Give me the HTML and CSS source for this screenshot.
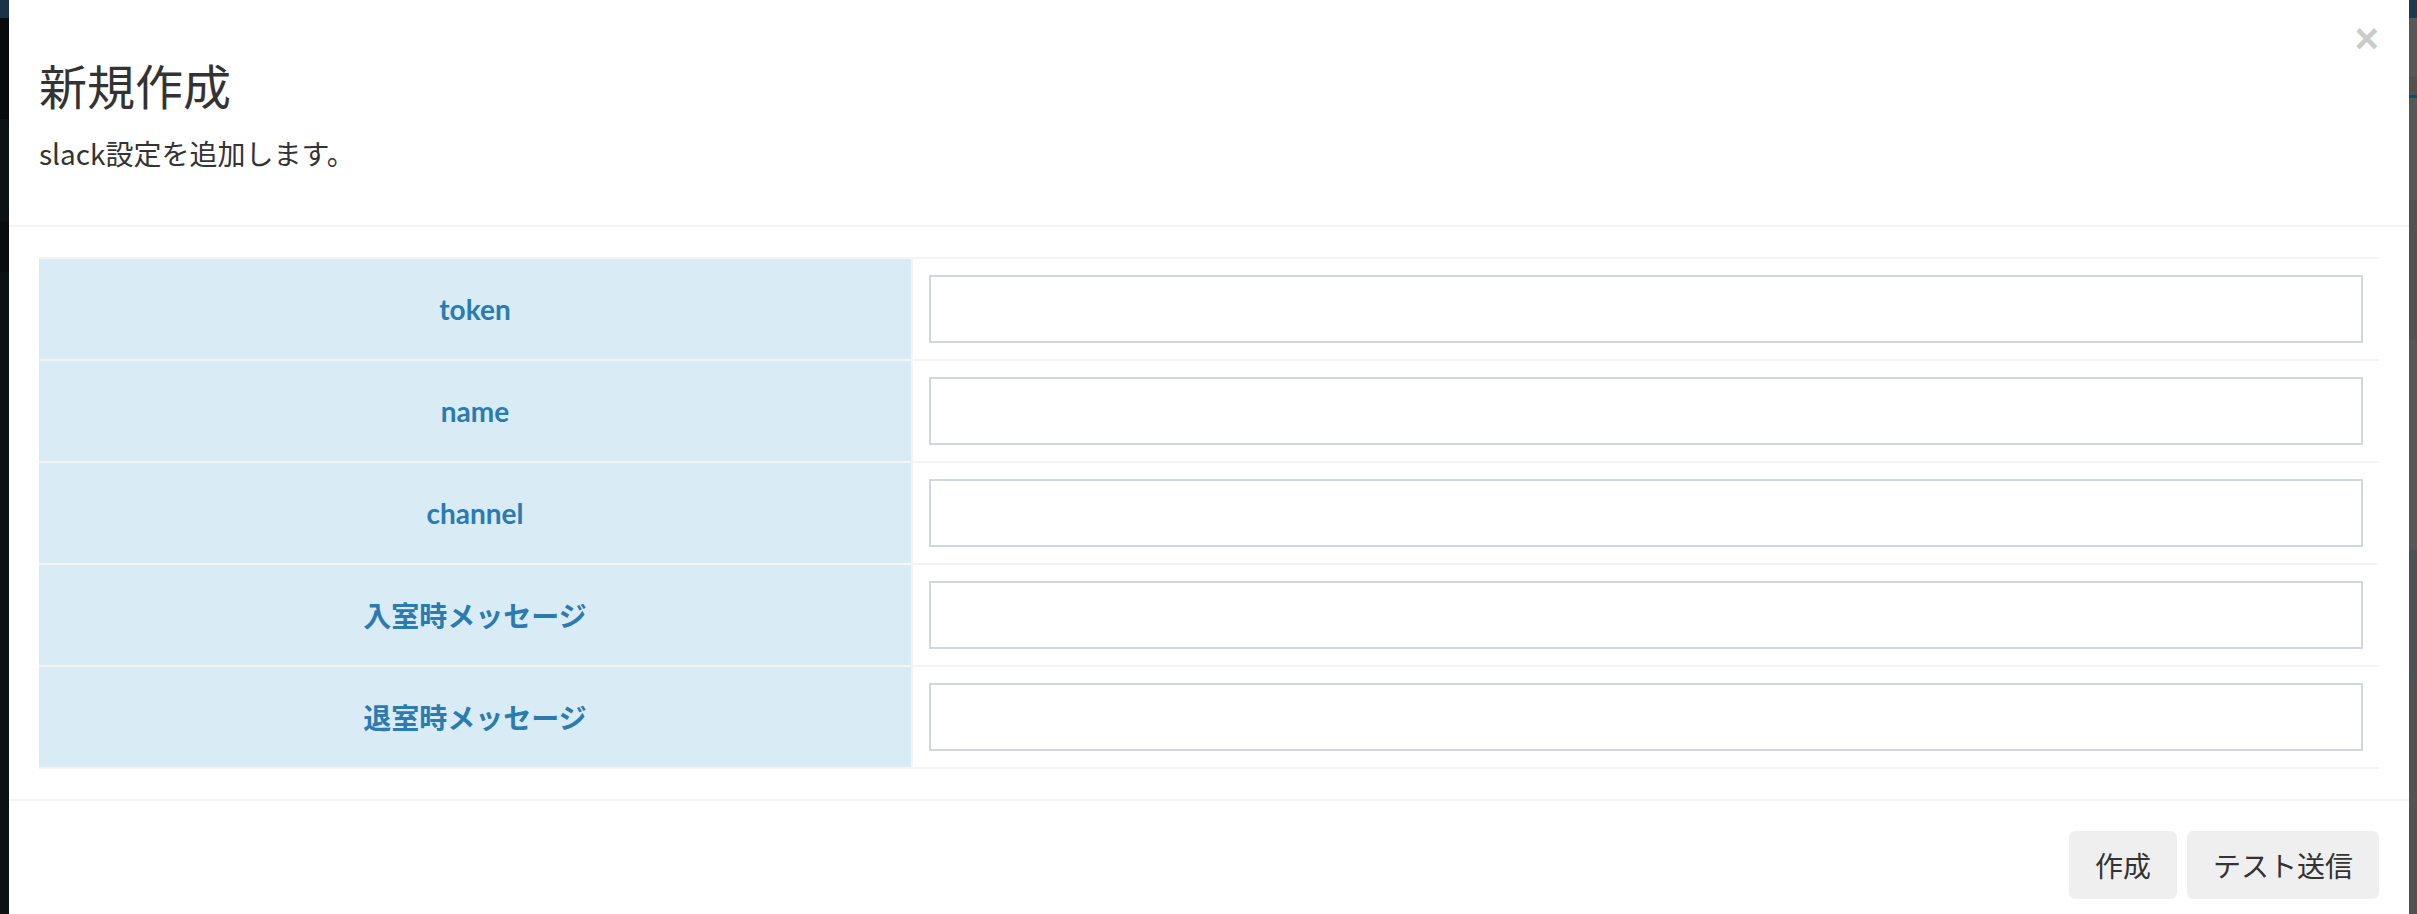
FILE: index.html
```html
<!DOCTYPE html>
<html lang="ja">
<head>
<meta charset="utf-8">
<title>新規作成</title>
<link rel="stylesheet" href="styles.css">
</head>
<body>
<div class="page">
  <div class="backdrop backdrop-left"></div>
  <div class="modal">
    <button class="close" type="button" aria-label="Close">×</button>
    <div class="modal-header">
      <h4 class="modal-title">新規作成</h4>
      <p class="modal-desc">slack設定を追加します。</p>
    </div>
    <div class="modal-body">
      <table class="form-table">
        <tr><th>token</th><td><input class="form-control" type="text"></td></tr>
        <tr><th>name</th><td><input class="form-control" type="text"></td></tr>
        <tr><th>channel</th><td><input class="form-control" type="text"></td></tr>
        <tr><th>入室時メッセージ</th><td><input class="form-control" type="text"></td></tr>
        <tr><th>退室時メッセージ</th><td><input class="form-control" type="text"></td></tr>
      </table>
    </div>
    <div class="modal-footer">
      <button class="btn" type="button">作成</button>
      <button class="btn" type="button">テスト送信</button>
    </div>
  </div>
  <div class="backdrop backdrop-right"></div>
</div>
</body>
</html>
```
FILE: styles.css
```css
html, body {
  margin: 0;
  height: 914px;
  overflow: hidden;
}
body {
  font-family: "Noto Sans CJK JP", "Noto Sans", sans-serif;
  color: #333;
  background: #0c1012;
}
.page {
  display: flex;
  height: 914px;
}
.backdrop-left {
  width: 9px;
  background: linear-gradient(#1b3347 0 18px, #080a0b 18px 119px, #0d1214 119px 222px, #090b0c 222px 272px, #0c1113 272px);
}
.backdrop-right {
  width: 8px;
  background: linear-gradient(#1b3a4d 0 18px, #575757 18px 77px, #515151 77px 95px, #0e5069 95px 98px, #575757 98px 200px, #525252 200px 340px, #575757 340px 550px, #4c5253 550px 680px, #525252 680px);
}
.modal {
  width: 2400px;
  background: #fff;
  position: relative;
  display: flex;
  flex-direction: column;
}
.close {
  position: absolute;
  top: 18px;
  right: 30px;
  padding: 0;
  border: 0;
  background: none;
  font-family: "Liberation Sans", Arial, sans-serif;
  font-size: 42px;
  font-weight: 700;
  line-height: 1;
  color: #000;
  opacity: 0.2;
  cursor: pointer;
}
.modal-header {
  padding: 58px 30px 30px;
  border-bottom: 2px solid #f4f4f4;
}
.modal-title {
  margin: 0;
  font-size: 48px;
  font-weight: 400;
  line-height: 53px;
}
.modal-desc {
  margin: 22px 0 22px;
  font-size: 28px;
  line-height: 40px;
}
.modal-body {
  padding: 30px;
}
.form-table {
  width: 100%;
  border-collapse: separate;
  border-spacing: 0;
  border-top: 2px solid #f4f4f4;
}
.form-table th,
.form-table td {
  padding: 16px;
  border-bottom: 2px solid #f2f4f5;
  vertical-align: middle;
}
.form-table th {
  width: 840px;
  background: #d9ecf5;
  border-right: 2px solid #f4f4f4;
  color: #2b7bb1;
  font-family: Lato, "Noto Sans CJK JP", sans-serif;
  font-size: 28px;
  font-weight: 700;
  text-align: center;
}
.form-control {
  display: block;
  box-sizing: border-box;
  width: 100%;
  height: 68px;
  margin: 0;
  border: 2px solid #d2d6de;
  border-radius: 0;
  background: #fff;
  font: inherit;
  font-size: 28px;
}
.modal-footer {
  display: flex;
  justify-content: flex-end;
  gap: 10px;
  padding: 30px;
  border-top: 2px solid #f4f4f4;
}
.btn {
  padding: 12px 24px;
  border: 2px solid #efefef;
  border-radius: 6px;
  background: #efefef;
  color: #333;
  font-family: "Noto Sans CJK JP", "Noto Sans", sans-serif;
  font-size: 28px;
  line-height: 40px;
  cursor: pointer;
}
```
